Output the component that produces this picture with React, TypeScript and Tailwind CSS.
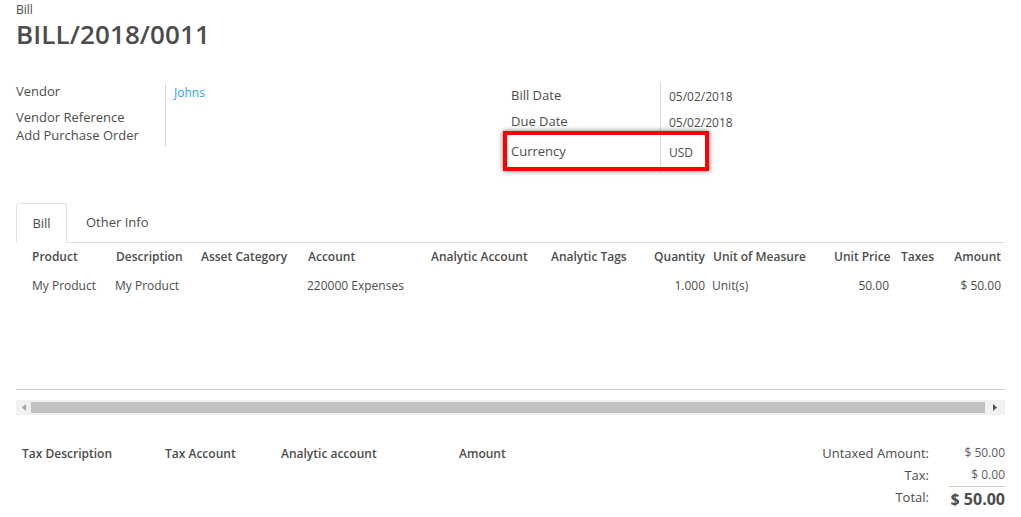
import React from 'react';

const cols = 'grid-cols-[84px_85px_107px_123px_120px_98px_64px_121px_67px_48px_60px]';

const headers = [
  { label: 'Product' },
  { label: 'Description' },
  { label: 'Asset Category' },
  { label: 'Account' },
  { label: 'Analytic Account' },
  { label: 'Analytic Tags' },
  { label: 'Quantity', right: true },
  { label: 'Unit of Measure' },
  { label: 'Unit Price', right: true, pr: true },
  { label: 'Taxes' },
  { label: 'Amount', right: true },
];

const row = ['My Product', 'My Product', '', '220000 Expenses', '', '', '1.000', 'Unit(s)', '50.00', '', '$ 50.00'];

export default function App() {
  return (
    <div className="relative w-[1021px] h-[517px] overflow-hidden bg-white text-[#4c4c4c] font-['Open_Sans',sans-serif]">
      <div className="px-4">
        {/* title */}
        <div className="pt-[2px] text-[12px] leading-[16px] font-medium">Bill</div>
        <h1 className="text-[26px] leading-[32px] font-semibold tracking-[0.1px]">BILL/2018/0011</h1>

        {/* header groups */}
        <div className="flex mt-[33px] h-[101px]">
          <div className="flex w-[495px]">
            <div className="w-[150px] border-r border-[#d9d9d9] h-[63px] text-[13px] font-medium leading-[18px]">
              <div className="-mt-px">Vendor</div>
              <div className="mt-[8px]">Vendor Reference</div>
              <div>Add Purchase Order</div>
            </div>
            <div className="pl-[8px] pt-[1px] text-[12px] leading-[18px] text-[#2ea3e6]">Johns</div>
          </div>
          <div className="flex">
            <div className="w-[150px] border-r border-[#d9d9d9] h-[90px] text-[13px] font-medium leading-[18px] pt-[3px]">
              <div>Bill Date</div>
              <div className="mt-[8px]">Due Date</div>
              <div className="mt-[12px]">Currency</div>
            </div>
            <div className="pl-[8px] pt-[5px] text-[12px] leading-[18px]">
              <div>05/02/2018</div>
              <div className="mt-[8px]">05/02/2018</div>
              <div className="mt-[12px]">USD</div>
            </div>
          </div>
        </div>

        {/* tabs */}
        <div className="mt-[19px] flex items-end border-b border-[#dee2e6] h-[40px]">
          <div className="h-[40px] w-[51px] -mb-px border border-b-white border-[#dee2e6] rounded-t-[3px] bg-white flex items-center justify-center text-[13px] pt-px">
            Bill
          </div>
          <div className="h-[40px] flex items-center pl-[19px] text-[13px] pt-px">Other Info</div>
        </div>

        {/* lines table */}
        <div className="h-[147px] border-b border-[#cccccc] pl-3">
          <div className={`grid ${cols} h-[28px] items-center text-[12px] font-semibold`}>
            {headers.map((h) => (
              <div
                key={h.label}
                className={`px-1 whitespace-nowrap ${h.right ? 'text-right' : ''} ${h.pr ? 'pr-[8px]' : ''}`}
              >
                {h.label}
              </div>
            ))}
          </div>
          <div className={`grid ${cols} h-[30px] items-center text-[12px]`}>
            {row.map((c, i) => (
              <div
                key={i}
                className={`px-1 whitespace-nowrap ${headers[i].right ? 'text-right' : ''} ${headers[i].pr ? 'pr-[8px]' : ''} ${i === 1 || i === 3 || i === 7 ? '-ml-px' : ''}`}
              >
                {c}
              </div>
            ))}
          </div>
        </div>

        {/* scrollbar */}
        <div className="mt-[10px] h-[15px] bg-[#f1f1f1] flex items-center">
          <div className="w-[15px] flex justify-center">
            <svg width="4" height="7" viewBox="0 0 4 7"><path d="M4 0 L0 3.5 L4 7 Z" fill="#a3a3a3" /></svg>
          </div>
          <div className="flex-1 h-[11px] bg-[#c1c1c1]" />
          <div className="w-[20px] flex justify-center">
            <svg width="4" height="7" viewBox="0 0 4 7"><path d="M0 0 L4 3.5 L0 7 Z" fill="#505050" /></svg>
          </div>
        </div>

        {/* footer */}
        <div className="flex justify-between mt-[28px]">
          <div className="flex text-[12px] font-semibold pl-[6px] pt-[2px]">
            <div className="w-[143px]">Tax Description</div>
            <div className="w-[116px]">Tax Account</div>
            <div className="w-[178px]">Analytic account</div>
            <div>Amount</div>
          </div>
          <div className="grid grid-cols-[auto_76px] text-right leading-[22px] -mt-px">
            <div className="text-[13px] font-medium">Untaxed Amount:</div>
            <div className="text-[12px] text-[#5b5b6b]">$ 50.00</div>
            <div className="text-[13px] font-medium">Tax:</div>
            <div className="text-[12px] text-[#5b5b6b]">$ 0.00</div>
            <div className="text-[13px] font-medium">Total:</div>
            <div className="ml-[20px] border-t border-[#cccccc] text-[16px] font-bold leading-[24px]">$ 50.00</div>
          </div>
        </div>
      </div>

      {/* highlight box */}
      <div className="absolute left-[503px] top-[131px] w-[206px] h-[40px] border-[4px] border-[#ff0000] shadow-[0_0_5px_rgba(0,0,0,0.55)]" />
    </div>
  );
}
